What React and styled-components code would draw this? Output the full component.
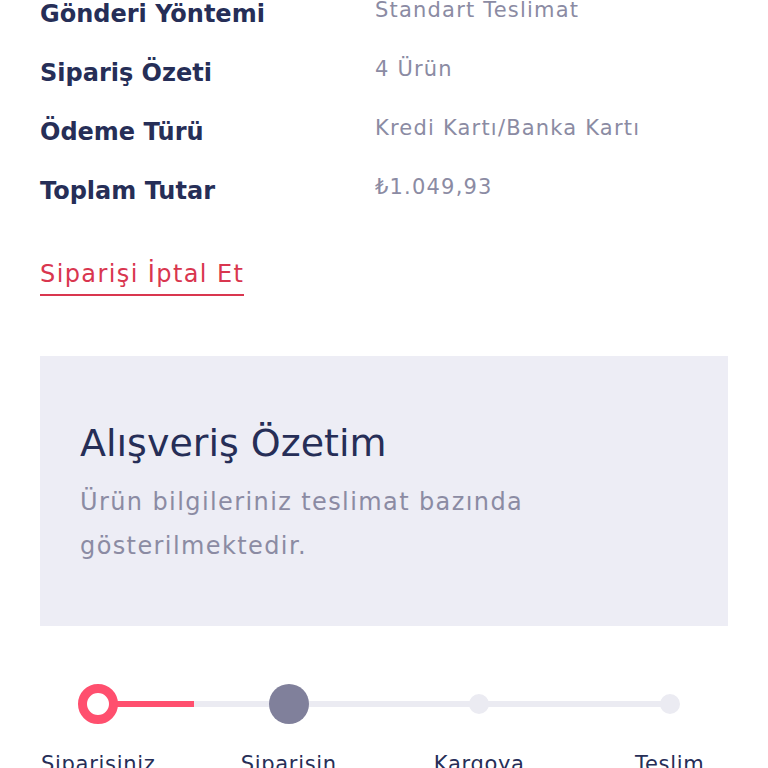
import React from "react";
import styled, { createGlobalStyle } from "styled-components";

const Global = createGlobalStyle`
  html, body { margin: 0; padding: 0; background: #ffffff; }
  body { font-family: "DejaVu Sans", "Noto Sans", sans-serif; overflow: hidden; }
`;

const Page = styled.div`
  width: 768px;
  height: 768px;
  overflow: hidden;
  padding: 0 40px;
  box-sizing: border-box;
`;

const Details = styled.div`
  display: grid;
  grid-template-columns: 335px 1fr;
  grid-auto-rows: 59px;
  align-items: start;
`;

const Label = styled.div`
  font-size: 24px;
  line-height: 28px;
  font-weight: 700;
  color: #262e57;
`;

const Value = styled.div`
  font-size: 21px;
  line-height: 20px;
  font-weight: 400;
  letter-spacing: 1.2px;
  color: #8b8ba3;
`;

const CancelLink = styled.a`
  display: inline-block;
  margin-top: 24px;
  font-size: 24px;
  line-height: 28px;
  letter-spacing: 1.4px;
  color: #d9364f;
  text-decoration: none;
  padding-bottom: 6px;
  border-bottom: 2px solid #d9364f;
`;

const SummaryCard = styled.section`
  margin-top: 60px;
  height: 270px;
  box-sizing: border-box;
  background: #ededf5;
  padding: 65px 40px 0;
`;

const CardTitle = styled.h2`
  margin: 0;
  font-size: 38px;
  line-height: 44px;
  font-weight: 400;
  color: #262e57;
`;

const CardText = styled.p`
  margin: 15px 0 0;
  font-size: 24px;
  line-height: 44px;
  letter-spacing: 1.4px;
  color: #8b8ba3;
  max-width: 500px;
`;

const Stepper = styled.ol`
  list-style: none;
  padding: 0;
  margin: 58px 0 0 -37px;
  display: grid;
  grid-template-columns: repeat(4, 190.5px);
`;

const Step = styled.li`
  position: relative;
  display: flex;
  flex-direction: column;
  align-items: center;
`;

const Track = styled.span`
  position: absolute;
  top: 17px;
  left: 50%;
  width: 100%;
  height: 6px;
  background: #ebebf2;
  z-index: 0;
`;

const Progress = styled.span`
  position: absolute;
  left: 0;
  top: 0;
  height: 100%;
  background: #ff4f6e;
`;

const DotBox = styled.div`
  position: relative;
  z-index: 1;
  height: 40px;
  display: flex;
  align-items: center;
  justify-content: center;
`;

const Dot = styled.span`
  display: block;
  box-sizing: border-box;
  border-radius: 50%;
  width: ${(p) => (p.$state === "todo" ? 20 : 40)}px;
  height: ${(p) => (p.$state === "todo" ? 20 : 40)}px;
  background: ${(p) =>
    p.$state === "active" ? "#ffffff" : p.$state === "next" ? "#80809b" : "#ebebf2"};
  border: ${(p) => (p.$state === "active" ? "9px solid #ff4f6e" : "none")};
`;

const StepLabel = styled.span`
  margin-top: 26px;
  font-size: 21px;
  line-height: 28px;
  letter-spacing: 0.7px;
  color: #262e57;
  white-space: nowrap;
`;

const rows = [
  ["Gönderi Yöntemi", "Standart Teslimat"],
  ["Sipariş Özeti", "4 Ürün"],
  ["Ödeme Türü", "Kredi Kartı/Banka Kartı"],
  ["Toplam Tutar", "₺1.049,93"],
];

const steps = [
  { label: "Siparişiniz", state: "active", progress: 50 },
  { label: "Siparişin", state: "next" },
  { label: "Kargoya", state: "todo" },
  { label: "Teslim", state: "todo", last: true },
];

export default function App() {
  return (
    <>
      <Global />
      <Page>
        <Details>
          {rows.map(([l, v]) => (
            <React.Fragment key={l}>
              <Label>{l}</Label>
              <Value>{v}</Value>
            </React.Fragment>
          ))}
        </Details>
        <CancelLink href="#">Siparişi İptal Et</CancelLink>
        <SummaryCard>
          <CardTitle>Alışveriş Özetim</CardTitle>
          <CardText>Ürün bilgileriniz teslimat bazında gösterilmektedir.</CardText>
        </SummaryCard>
        <Stepper>
          {steps.map((s) => (
            <Step key={s.label}>
              {!s.last && (
                <Track>
                  {s.progress ? <Progress style={{ width: `${s.progress}%` }} /> : null}
                </Track>
              )}
              <DotBox>
                <Dot $state={s.state} />
              </DotBox>
              <StepLabel>{s.label}</StepLabel>
            </Step>
          ))}
        </Stepper>
      </Page>
    </>
  );
}
